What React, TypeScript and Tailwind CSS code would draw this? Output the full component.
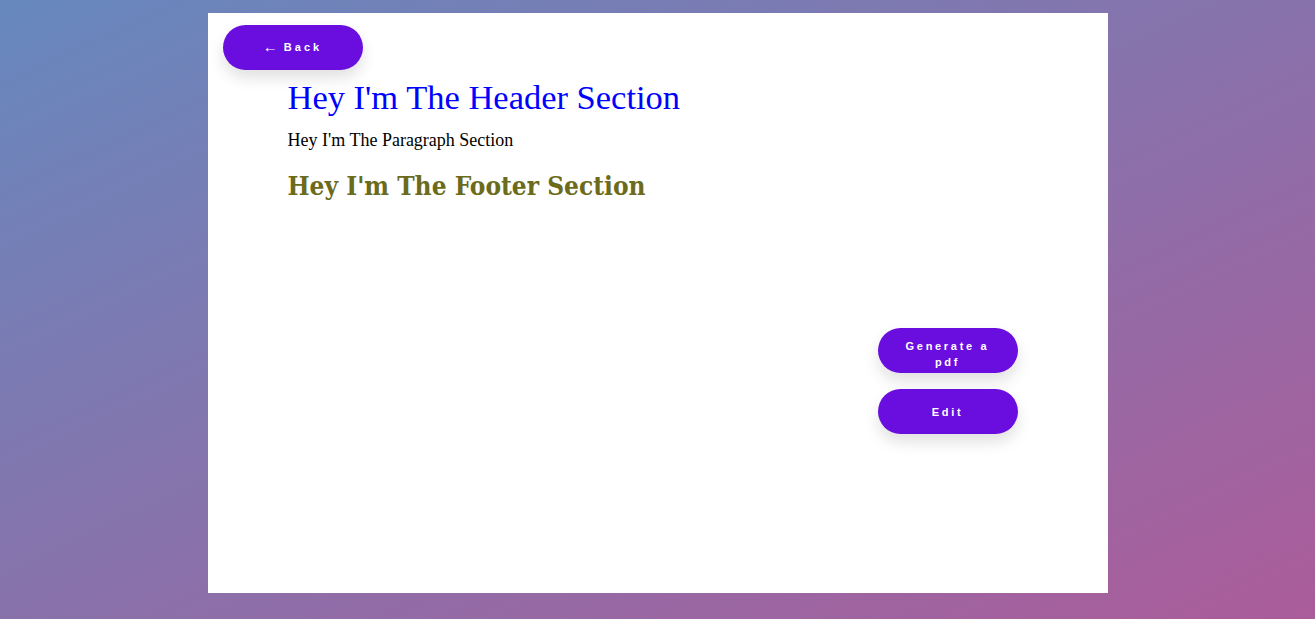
export default function App() {
  return (
    <div className="min-h-screen w-full bg-[linear-gradient(to_bottom_right,#6688bd,#ab5c9a)] flex justify-center pt-[13px] pb-[26px]">
      <div className="relative w-[900px] h-[580px] bg-white">
        <button
          type="button"
          className="absolute left-[15px] top-[12px] w-[140px] h-[45px] rounded-full bg-[#6a0ddf] text-white text-[11px] font-bold tracking-[3px] shadow-[0_8px_15px_rgba(0,0,0,0.12)] font-['Liberation_Sans',sans-serif] flex items-center justify-center"
        >
          <span className="text-[15px] font-normal tracking-normal mr-[6px] mb-[3px] leading-none">←</span>
          Back
        </button>

        <div className="pl-[80px] pt-[63px]">
          <h1 className="font-['Liberation_Serif',serif] text-[34.5px] leading-[42px] text-[#0000ff]">
            Hey I'm The Header Section
          </h1>
          <p className="mt-[10px] font-['Liberation_Serif',serif] text-[18px] leading-[24px] text-black">
            Hey I'm The Paragraph Section
          </p>
          <h2 className="mt-[17px] font-['DejaVu_Serif_Condensed','DejaVu_Serif',serif] font-bold text-[26px] leading-[34px] text-[#6b6b1b]">
            Hey I'm The Footer Section
          </h2>
        </div>

        <div className="absolute right-[90px] top-[315px] flex flex-col gap-[16px]">
          <button
            type="button"
            className="w-[140px] h-[45px] rounded-full bg-[#6a0ddf] text-white text-[11px] font-bold tracking-[2.7px] leading-[16px] px-[20px] pt-[6px] shadow-[0_8px_15px_rgba(0,0,0,0.12)] font-['Liberation_Sans',sans-serif]"
          >
            Generate a pdf
          </button>
          <button
            type="button"
            className="w-[140px] h-[45px] rounded-full bg-[#6a0ddf] text-white text-[11px] font-bold tracking-[2.7px] pt-[2px] shadow-[0_8px_15px_rgba(0,0,0,0.12)] font-['Liberation_Sans',sans-serif]"
          >
            Edit
          </button>
        </div>
      </div>
    </div>
  );
}
